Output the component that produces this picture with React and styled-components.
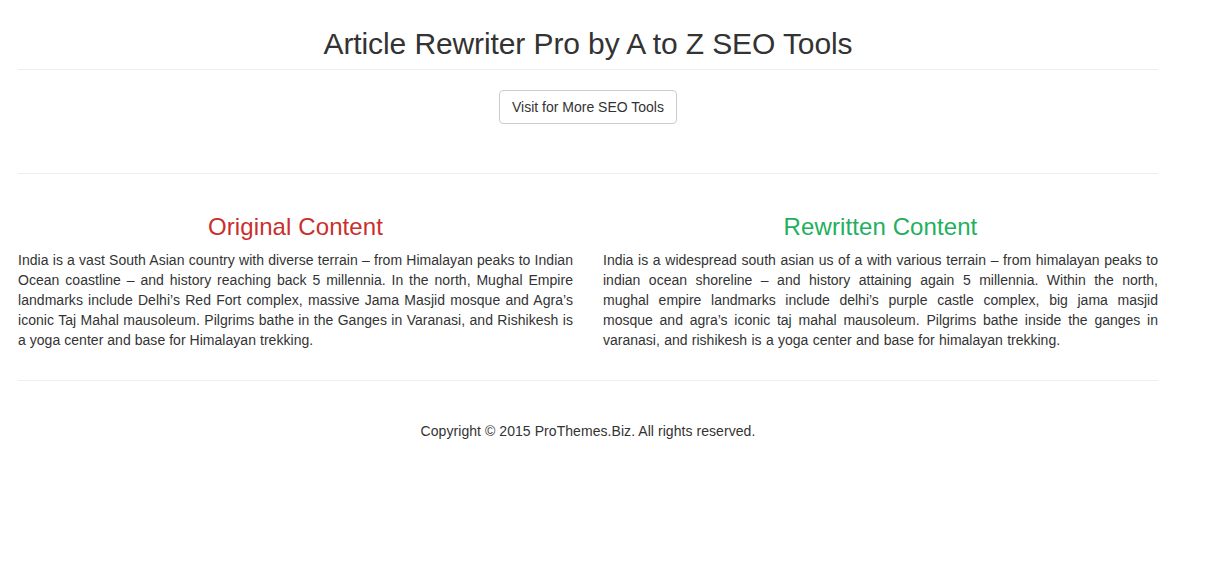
import React from 'react';
import styled, { createGlobalStyle } from 'styled-components';

const GlobalStyle = createGlobalStyle`
  html, body {
    margin: 0;
    padding: 0;
    background: #fff;
  }
  body {
    font-family: "Liberation Sans", Arial, Helvetica, sans-serif;
    font-size: 14px;
    line-height: 20px;
    color: #333;
  }
`;

const Page = styled.div`
  width: 1140px;
  padding: 0 0 0 18px;
`;

const Title = styled.h1`
  margin: 0;
  padding-top: 27px;
  font-size: 30px;
  line-height: 33px;
  font-weight: 400;
  letter-spacing: -0.1px;
  text-align: center;
  color: #333;
`;

const Rule = styled.hr`
  margin: ${(props) => props.$top}px 0 0;
  border: 0;
  border-top: 1px solid #eee;
  height: 0;
`;

const ButtonRow = styled.div`
  display: flex;
  justify-content: center;
  padding-top: 20px;
  padding-bottom: 49px;
`;

const Button = styled.a`
  display: inline-block;
  box-sizing: border-box;
  height: 34px;
  padding: 6px 12px;
  font-size: 14px;
  line-height: 20px;
  color: #333;
  background: #fff;
  border: 1px solid #ccc;
  border-radius: 4px;
  text-decoration: none;
  cursor: pointer;
`;

const Columns = styled.div`
  display: grid;
  grid-template-columns: 555px 555px;
  column-gap: 30px;
  padding-top: 40px;
  padding-bottom: 30px;
`;

const Column = styled.div`
  display: flex;
  flex-direction: column;
`;

const Heading = styled.h3`
  margin: 0 0 10px;
  font-size: 24px;
  line-height: 26px;
  font-weight: 400;
  letter-spacing: 0.1px;
  text-align: center;
  color: ${(props) => props.$color};
`;

const Text = styled.p`
  margin: 0;
  letter-spacing: ${(props) => props.$letters}px;
  word-spacing: ${(props) => props.$words}px;
  text-align: justify;
`;

const Footer = styled.footer`
  padding-top: 40px;
  letter-spacing: 0.06px;
  text-align: center;
`;

const original =
  'India is a vast South Asian country with diverse terrain – from Himalayan peaks to Indian Ocean coastline – and history reaching back 5 millennia. In the north, Mughal Empire landmarks include Delhi’s Red Fort complex, massive Jama Masjid mosque and Agra’s iconic Taj Mahal mausoleum. Pilgrims bathe in the Ganges in Varanasi, and Rishikesh is a yoga center and base for Himalayan trekking.';

const rewritten =
  'India is a widespread south asian us of a with various terrain – from himalayan peaks to indian ocean shoreline – and history attaining again 5 millennia. Within the north, mughal empire landmarks include delhi’s purple castle complex, big jama masjid mosque and agra’s iconic taj mahal mausoleum. Pilgrims bathe inside the ganges in varanasi, and rishikesh is a yoga center and base for himalayan trekking.';

const App = () => {
  return (
    <>
      <GlobalStyle />
      <Page>
        <Title>Article Rewriter Pro by A to Z SEO Tools</Title>
        <Rule $top={9} />
        <ButtonRow>
          <Button>Visit for More SEO Tools</Button>
        </ButtonRow>
        <Rule $top={0} />
        <Columns>
          <Column>
            <Heading $color="#c9302c">Original Content</Heading>
            <Text $letters={0.04} $words={0}>{original}</Text>
          </Column>
          <Column>
            <Heading $color="#22b05e">Rewritten Content</Heading>
            <Text $letters={0} $words={0.45}>{rewritten}</Text>
          </Column>
        </Columns>
        <Rule $top={0} />
        <Footer>Copyright © 2015 ProThemes.Biz. All rights reserved.</Footer>
      </Page>
    </>
  );
};

export default App;
